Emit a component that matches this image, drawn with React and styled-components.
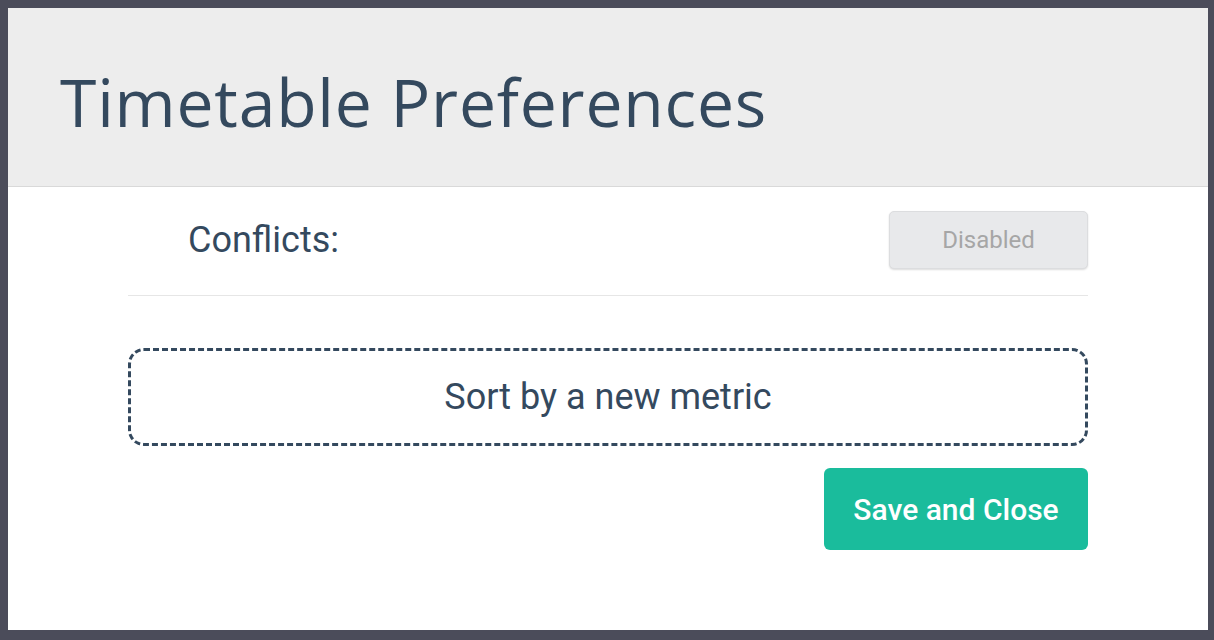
import React from 'react';
import styled, { createGlobalStyle } from 'styled-components';

const GlobalStyle = createGlobalStyle`
  html, body {
    margin: 0;
    padding: 0;
    background: #4b4c5a;
  }
  body {
    font-family: Roboto, "Liberation Sans", sans-serif;
  }
`;

const Overlay = styled.div`
  width: 1214px;
  height: 640px;
  box-sizing: border-box;
  padding: 8px 6px 10px 8px;
  background: #4b4c5a;
`;

const Modal = styled.div`
  background: #ffffff;
  height: 622px;
  display: flex;
  flex-direction: column;
`;

const Header = styled.header`
  height: 179px;
  box-sizing: border-box;
  background: #ededed;
  border-bottom: 1px solid #d9d9d9;
  display: flex;
  align-items: center;
  padding-left: 52px;
  padding-top: 8px;
`;

const Title = styled.h1`
  margin: 0;
  font-family: "Open Sans", sans-serif;
  font-weight: 500;
  font-size: 66px;
  letter-spacing: 0.8px;
  color: #34495e;
`;

const Body = styled.div`
  width: 960px;
  margin: 0 auto;
  padding-top: 24px;
  display: flex;
  flex-direction: column;
`;

const Row = styled.div`
  display: flex;
  align-items: center;
  justify-content: space-between;
  padding-left: 60px;
  padding-bottom: 26px;
  border-bottom: 1px solid #e6e6e6;
`;

const Label = styled.span`
  font-size: 36px;
  color: #34495e;
`;

const ToggleButton = styled.button`
  width: 199px;
  height: 58px;
  border: 1px solid #dcdddf;
  border-radius: 5px;
  background: #e8e9eb;
  box-shadow: 0 1px 2px rgba(0, 0, 0, 0.14);
  font-family: Roboto, sans-serif;
  font-size: 24px;
  color: #a6a6a6;
`;

const SortBox = styled.div`
  margin-top: 52px;
  height: 98px;
  box-sizing: border-box;
  border: 3px dashed #34495e;
  border-radius: 16px;
  display: flex;
  align-items: center;
  justify-content: center;
  font-size: 36px;
  color: #34495e;
`;

const Actions = styled.div`
  display: flex;
  justify-content: flex-end;
  margin-top: 22px;
`;

const PrimaryButton = styled.button`
  width: 264px;
  height: 82px;
  border: none;
  border-radius: 6px;
  background: #1abc9c;
  color: #ffffff;
  font-family: Roboto, sans-serif;
  font-weight: 500;
  font-size: 30px;
`;

export default function App() {
  return (
    <Overlay>
      <GlobalStyle />
      <Modal>
        <Header>
          <Title>Timetable Preferences</Title>
        </Header>
        <Body>
          <Row>
            <Label>Conflicts:</Label>
            <ToggleButton>Disabled</ToggleButton>
          </Row>
          <SortBox>Sort by a new metric</SortBox>
          <Actions>
            <PrimaryButton>Save and Close</PrimaryButton>
          </Actions>
        </Body>
      </Modal>
    </Overlay>
  );
}
